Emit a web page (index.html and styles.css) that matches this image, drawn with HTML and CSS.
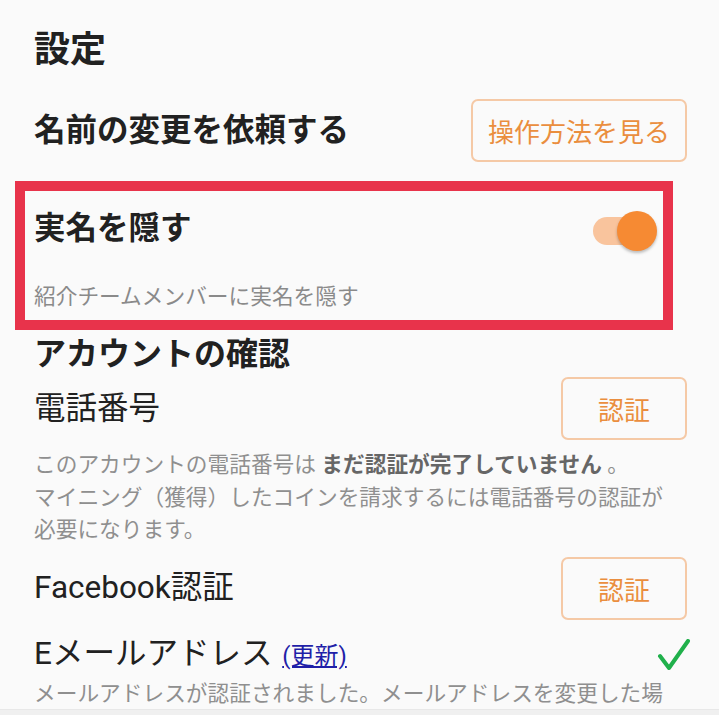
FILE: index.html
```html
<!DOCTYPE html>
<html lang="ja">
<head>
    <meta charset="UTF-8">
    <meta name="viewport" content="width=device-width, initial-scale=1.0">
    <title>設定</title>
    <link rel="stylesheet" href="styles.css">
</head>
<body>
    <div class="page">
        <h1 class="title">設定</h1>

        <div class="row row-name">
            <div class="row-label bold">名前の変更を依頼する</div>
            <button class="outline-btn wide">操作方法を見る</button>
        </div>

        <div class="highlight">
            <div class="toggle-row">
                <div class="row-label bold">実名を隠す</div>
                <div class="switch on">
                    <span class="track"></span>
                    <span class="thumb"></span>
                </div>
            </div>
            <div class="hint">紹介チームメンバーに実名を隠す</div>
        </div>

        <h2 class="section">アカウントの確認</h2>

        <div class="row row-phone">
            <div class="row-label">電話番号</div>
            <button class="outline-btn">認証</button>
        </div>
        <p class="note">
            このアカウントの電話番号は <strong>まだ認証が完了していません</strong> 。<br>
            マイニング（獲得）したコインを請求するには電話番号の認証が必要になります。
        </p>

        <div class="row row-fb">
            <div class="row-label">Facebook認証</div>
            <button class="outline-btn">認証</button>
        </div>

        <div class="row row-mail">
            <div class="row-label">Eメールアドレス <a href="#" class="update-link">(更新)</a></div>
            <svg class="check" width="34" height="32" viewBox="0 0 34 32">
                <path d="M3 17 L12 29 L31 2" fill="none" stroke="#20b04b" stroke-width="4" stroke-linecap="round" stroke-linejoin="round"/>
            </svg>
        </div>
        <p class="note last">メールアドレスが認証されました。メールアドレスを変更した場</p>
    </div>
    <div class="bottom-strip"></div>
</body>
</html>
```

FILE: styles.css
```css
html, body {
    margin: 0;
    padding: 0;
    height: 100%;
    overflow: hidden;
}
body {
    font-family: Roboto, "Noto Sans CJK JP", sans-serif;
    background-color: #fafafa;
    color: #212121;
}
.page {
    padding: 30px 32px 0 34px;
}
.title {
    margin: 0;
    font-size: 36px;
    line-height: 40px;
    font-weight: 700;
}
.row {
    display: flex;
    align-items: center;
    justify-content: space-between;
}
.row-label {
    font-size: 31.5px;
    line-height: 40px;
}
.bold {
    font-weight: 700;
}
.row-name {
    margin-top: 29px;
}
.outline-btn {
    font-family: inherit;
    font-size: 26px;
    color: #ea8e3e;
    background-color: transparent;
    border: 2px solid #f5c9a6;
    border-radius: 7px;
    height: 63px;
    width: 126px;
    padding: 0;
    cursor: pointer;
}
.outline-btn.wide {
    width: 216px;
}
.highlight {
    margin: 19px 14px 0 -19px;
    border: 10px solid #e8334b;
    padding: 16px 6px 9px 9px;
}
.toggle-row {
    display: flex;
    align-items: center;
    justify-content: space-between;
}
.switch {
    position: relative;
    width: 64px;
    height: 40px;
    margin-top: 4px;
}
.switch .track {
    position: absolute;
    left: 0;
    top: 6px;
    width: 56px;
    height: 28px;
    border-radius: 14px;
    background-color: #f9c49d;
}
.switch .thumb {
    position: absolute;
    right: 0;
    top: 0;
    width: 40px;
    height: 40px;
    border-radius: 50%;
    background-color: #f68a33;
    box-shadow: 0 2px 3px rgba(0,0,0,0.25);
}
.hint {
    margin-top: 32px;
    font-size: 21.7px;
    line-height: 28px;
    color: #8a8a8a;
}
.section {
    margin: 4px 0 0;
    font-size: 32px;
    line-height: 40px;
    font-weight: 700;
}
.row-phone {
    margin-top: 3px;
}
.note {
    margin: 9px 0 0;
    padding-right: 10px;
    font-size: 21.7px;
    line-height: 32.5px;
    color: #8f8f8f;
}
.note strong {
    color: #666;
}
.row-fb {
    margin-top: 10px;
}
.row-mail {
    margin-top: 14px;
}
.update-link {
    font-size: 24px;
    color: #1f1fa8;
    margin-left: 2px;
}
.check {
    margin-right: -4px;
}
.note.last {
    margin-top: 3px;
    line-height: 30px;
}
.bottom-strip {
    height: 6px;
    background-color: #f0f0f0;
    border-top: 1px solid #e8e8e8;
}
```
